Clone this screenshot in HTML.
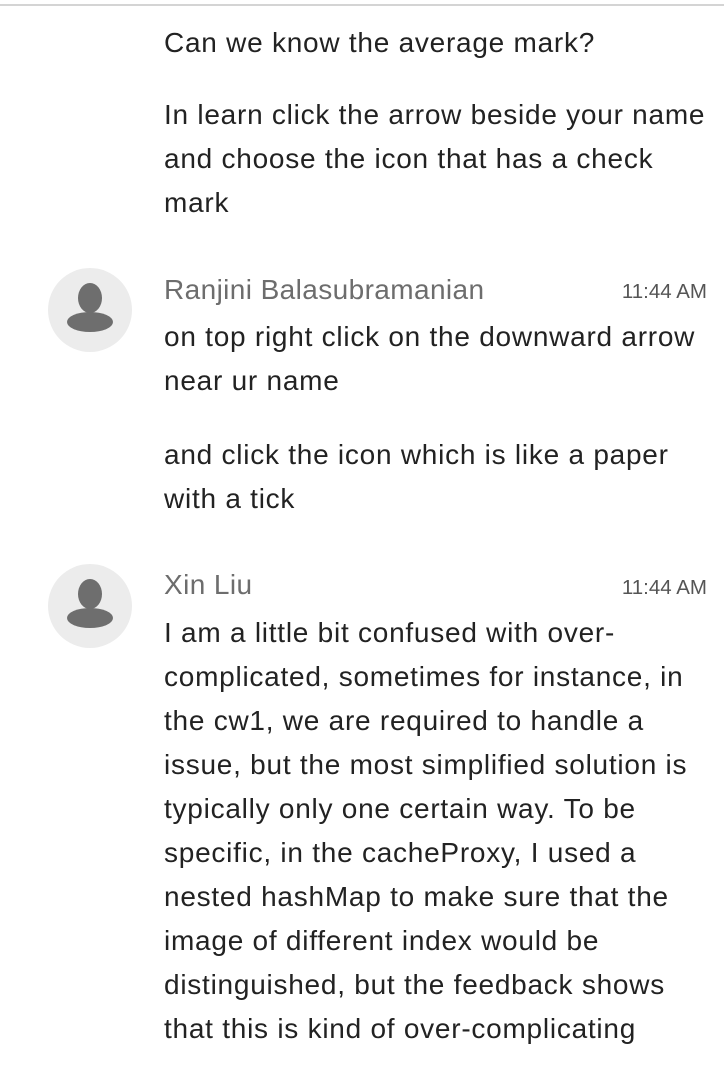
<!DOCTYPE html>
<html><head><meta charset="utf-8"><style>
body{margin:0;width:724px;height:1084px;background:#fff;position:relative;overflow:hidden;font-family:"Liberation Sans",sans-serif;}
.top{position:absolute;left:0;top:4px;width:724px;height:2px;background:#d4d4d4}
.l{position:absolute;left:164px;font-size:28px;color:#222;white-space:nowrap;line-height:44px;letter-spacing:0.75px;margin-top:1px}
.n{position:absolute;left:164px;font-size:28px;color:#6d6d6d;white-space:nowrap;line-height:44px;letter-spacing:0.4px;margin-top:1px}
.t{position:absolute;right:17px;font-size:20.5px;color:#555;line-height:44px}
.av{position:absolute;left:48px;width:84px;height:84px;border-radius:50%;background:#ececec}
</style></head><body>
<div class="top"></div>
<div class="l" style="top:20px">Can we know the average mark?</div>
<div class="l" style="top:92px">In learn click the arrow beside your name</div>
<div class="l" style="top:136px">and choose the icon that has a check</div>
<div class="l" style="top:180px">mark</div>

<div class="av" style="top:268px"><svg width="84" height="84"><ellipse cx="42" cy="30" rx="12" ry="15" fill="#6e6e6e"/><ellipse cx="42" cy="54" rx="23" ry="10" fill="#6e6e6e"/></svg></div>
<div class="n" style="top:267px">Ranjini Balasubramanian</div>
<div class="t" style="top:270px">11:44 AM</div>
<div class="l" style="top:314px">on top right click on the downward arrow</div>
<div class="l" style="top:358px">near ur name</div>
<div class="l" style="top:432px">and click the icon which is like a paper</div>
<div class="l" style="top:476px">with a tick</div>

<div class="av" style="top:564px"><svg width="84" height="84"><ellipse cx="42" cy="30" rx="12" ry="15" fill="#6e6e6e"/><ellipse cx="42" cy="54" rx="23" ry="10" fill="#6e6e6e"/></svg></div>
<div class="n" style="top:562px">Xin Liu</div>
<div class="t" style="top:566px">11:44 AM</div>
<div class="l" style="top:610px">I am a little bit confused with over-</div>
<div class="l" style="top:654px">complicated, sometimes for instance, in</div>
<div class="l" style="top:698px">the cw1, we are required to handle a</div>
<div class="l" style="top:742px">issue, but the most simplified solution is</div>
<div class="l" style="top:786px">typically only one certain way. To be</div>
<div class="l" style="top:830px">specific, in the cacheProxy, I used a</div>
<div class="l" style="top:874px">nested hashMap to make sure that the</div>
<div class="l" style="top:918px">image of different index would be</div>
<div class="l" style="top:962px">distinguished, but the feedback shows</div>
<div class="l" style="top:1006px">that this is kind of over-complicating</div>
</body></html>
